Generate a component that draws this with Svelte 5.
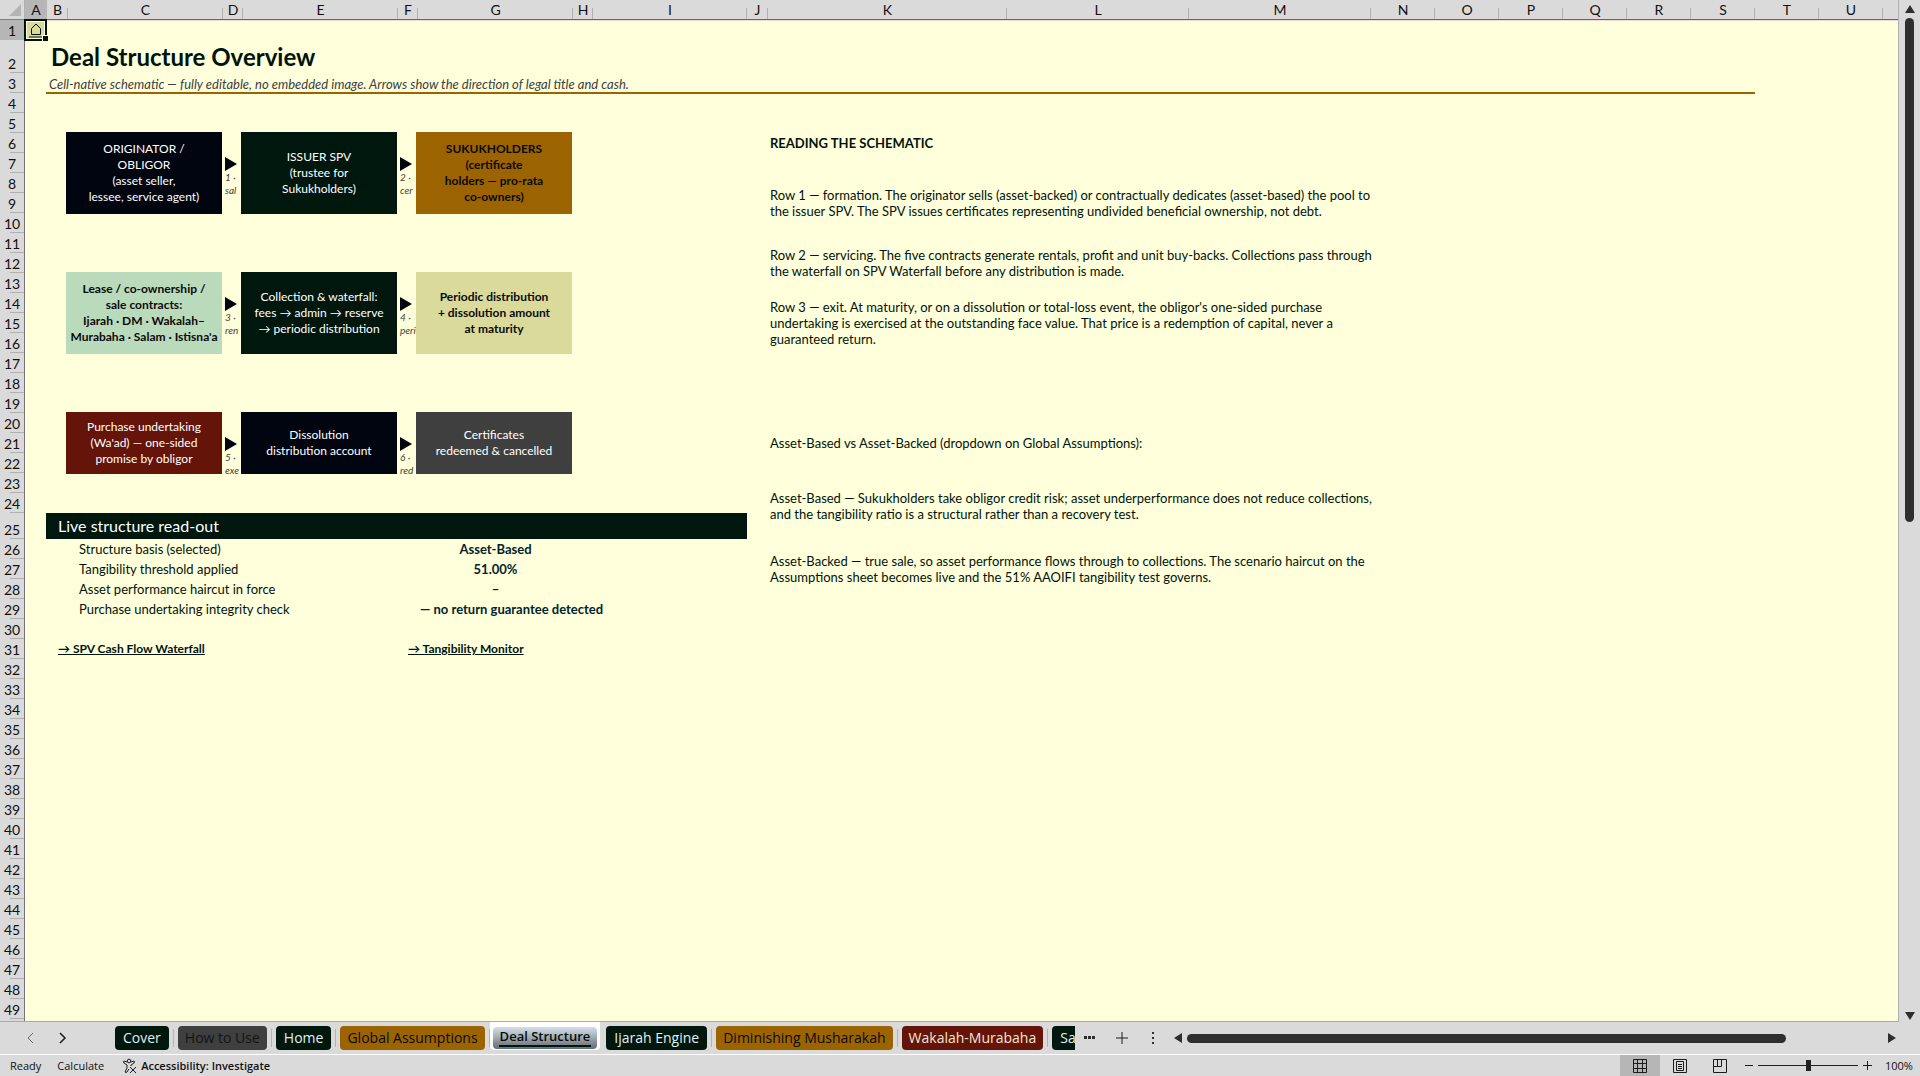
<script lang="ts">
	interface Col {
		name: string;
		width: string;
	}

	interface Box {
		row: string;
		col: number;
		tone: string;
		lines: string[];
	}

	interface Arrow {
		row: number;
		col: number;
		label: string[];
	}

	interface Tab {
		name: string;
		tone: string;
	}

	const cols: Col[] = [
		{ name: 'A', width: '22px' },
		{ name: 'B', width: '21px' },
		{ name: 'C', width: '155px' },
		{ name: 'D', width: '20px' },
		{ name: 'E', width: '155px' },
		{ name: 'F', width: '20px' },
		{ name: 'G', width: '155px' },
		{ name: 'H', width: '20px' },
		{ name: 'I', width: '154px' },
		{ name: 'J', width: '21px' },
		{ name: 'K', width: '239px' },
		{ name: 'L', width: '182px' },
		{ name: 'M', width: '182px' },
		...['N', 'O', 'P', 'Q', 'R', 'S', 'T', 'U'].map((name) => ({ name, width: '64px' }))
	];

	const rowCount = 49;
	const rowHeights: Record<number, string> = { 2: '33px', 25: '26px' };
	const rows = Array.from({ length: rowCount }, (_, i) => i + 1);

	const columnTemplate = cols.map((c) => c.width).join(' ');
	const rowTemplate = rows.map((r) => rowHeights[r] ?? '20px').join(' ');

	const boxes: Box[] = [
		{ row: '6 / 10', col: 3, tone: 'navy', lines: ['ORIGINATOR /', 'OBLIGOR', '(asset seller,', 'lessee, service agent)'] },
		{ row: '6 / 10', col: 5, tone: 'green', lines: ['ISSUER SPV', '(trustee for', 'Sukukholders)'] },
		{ row: '6 / 10', col: 7, tone: 'gold', lines: ['SUKUKHOLDERS', '(certificate', 'holders — pro-rata', 'co-owners)'] },
		{ row: '13 / 17', col: 3, tone: 'mint', lines: ['Lease / co-ownership /', 'sale contracts:', 'Ijarah · DM · Wakalah–', "Murabaha · Salam · Istisna'a"] },
		{ row: '13 / 17', col: 5, tone: 'green', lines: ['Collection & waterfall:', 'fees → admin → reserve', '→ periodic distribution'] },
		{ row: '13 / 17', col: 7, tone: 'sand', lines: ['Periodic distribution', '+ dissolution amount', 'at maturity'] },
		{ row: '20 / 23', col: 3, tone: 'maroon', lines: ['Purchase undertaking', "(Wa'ad) — one-sided", 'promise by obligor'] },
		{ row: '20 / 23', col: 5, tone: 'navy', lines: ['Dissolution', 'distribution account'] },
		{ row: '20 / 23', col: 7, tone: 'grey', lines: ['Certificates', 'redeemed & cancelled'] }
	];

	const arrows: Arrow[] = [
		{ row: 7, col: 4, label: ['1 ·', 'sal'] },
		{ row: 7, col: 6, label: ['2 ·', 'cer'] },
		{ row: 14, col: 4, label: ['3 ·', 'ren'] },
		{ row: 14, col: 6, label: ['4 ·', 'peri'] },
		{ row: 21, col: 4, label: ['5 ·', 'exe'] },
		{ row: 21, col: 6, label: ['6 ·', 'red'] }
	];

	const notes = [
		{ row: '8 / 11', lines: ['Row 1 — formation. The originator sells (asset-backed) or contractually dedicates (asset-based) the pool to', 'the issuer SPV. The SPV issues certificates representing undivided beneficial ownership, not debt.'] },
		{ row: '11 / 14', lines: ['Row 2 — servicing. The five contracts generate rentals, profit and unit buy-backs. Collections pass through', 'the waterfall on SPV Waterfall before any distribution is made.'] },
		{ row: '14 / 17', lines: ["Row 3 — exit. At maturity, or on a dissolution or total-loss event, the obligor's one-sided purchase", 'undertaking is exercised at the outstanding face value. That price is a redemption of capital, never a', 'guaranteed return.'] },
		{ row: '20 / 23', lines: ['Asset-Based vs Asset-Backed (dropdown on Global Assumptions):'] },
		{ row: '23 / 26', lines: ['Asset-Based — Sukukholders take obligor credit risk; asset underperformance does not reduce collections,', 'and the tangibility ratio is a structural rather than a recovery test.'] },
		{ row: '26 / 29', lines: ['Asset-Backed — true sale, so asset performance flows through to collections. The scenario haircut on the', 'Assumptions sheet becomes live and the 51% AAOIFI tangibility test governs.'] }
	];

	const readout = [
		['Structure basis (selected)', 'Asset-Based'],
		['Tangibility threshold applied', '51.00%'],
		['Asset performance haircut in force', '–'],
		['Purchase undertaking integrity check', '— no return guarantee detected']
	];

	const tabs: Tab[] = [
		{ name: 'Cover', tone: 'green' },
		{ name: 'How to Use', tone: 'slate' },
		{ name: 'Home', tone: 'green' },
		{ name: 'Global Assumptions', tone: 'gold' },
		{ name: 'Deal Structure', tone: 'green' },
		{ name: 'Ijarah Engine', tone: 'green' },
		{ name: 'Diminishing Musharakah', tone: 'gold' },
		{ name: 'Wakalah-Murabaha', tone: 'maroon' },
		{ name: 'Salam', tone: 'green' }
	];

	let active = $state('Deal Structure');
	let zoom = $state(100);
</script>

<div class="app">
	<div class="workspace">
		<div class="sheet">
			<div class="corner">
				<svg viewBox="0 0 12 12" width="12" height="12"><path d="M12 0v12H0z" /></svg>
			</div>
			<div class="col-heads" style:grid-template-columns={columnTemplate}>
				{#each cols as col}
					<span class:selected={col.name === 'A'}>{col.name}</span>
				{/each}
			</div>
			<div class="row-heads" style:grid-template-rows={rowTemplate}>
				{#each rows as row}
					<span class:selected={row === 1}>{row}</span>
				{/each}
			</div>

			<main
				class="cells"
				style:grid-template-columns={columnTemplate}
				style:grid-template-rows={rowTemplate}
			>
				<a class="home" href="#home" aria-label="Home">
					<svg viewBox="0 0 14 16" width="14" height="16">
						<path d="M2.500 12.500V6.500L7 2l4.500 4.500v6zM0 15h14" />
					</svg>
				</a>
				<h1>Deal Structure Overview</h1>
				<p class="subtitle">
					Cell-native schematic — fully editable, no embedded image. Arrows show the direction of
					legal title and cash.
				</p>

				{#each boxes as box}
					<div class="box {box.tone}" style:grid-row={box.row} style:grid-column={box.col}>
						{#each box.lines as line}
							<span>{line}</span>
						{/each}
					</div>
				{/each}

				{#each arrows as arrow}
					<div class="arrow" style:grid-row="{arrow.row} / span 3" style:grid-column={arrow.col}>
						<svg viewBox="0 0 12 14" width="12" height="14"><path d="M0 0 12 7 0 14z" /></svg>
						{#each arrow.label as line}
							<span>{line}</span>
						{/each}
					</div>
				{/each}

				<h2 class="notes-title">READING THE SCHEMATIC</h2>
				{#each notes as note}
					<p class="note" style:grid-row={note.row}>
						{#each note.lines as line}
							<span>{line}</span>
						{/each}
					</p>
				{/each}

				<h2 class="banner">Live structure read-out</h2>
				<table class="readout">
					<tbody>
						{#each readout as [label, value]}
							<tr>
								<th scope="row">{label}</th>
								<td><span>{value}</span></td>
							</tr>
						{/each}
					</tbody>
				</table>

				<a class="jump waterfall" href="#waterfall">→ SPV Cash Flow Waterfall</a>
				<a class="jump tangibility" href="#tangibility">→ Tangibility Monitor</a>
			</main>
		</div>

		<div class="vscroll">
			<button aria-label="Scroll up">
				<svg viewBox="0 0 10 8" width="10" height="8"><path d="M5 0 10 8H0z" /></svg>
			</button>
			<div class="vtrack"><div class="thumb"></div></div>
			<button aria-label="Scroll down">
				<svg viewBox="0 0 10 8" width="10" height="8"><path d="M0 0h10L5 8z" /></svg>
			</button>
		</div>
	</div>

	<nav class="tabbar">
		<div class="steps">
			<button aria-label="Previous sheet">
				<svg class="line faded" viewBox="0 0 8 12" width="8" height="12"><path d="M7 1 2 6l5 5" /></svg>
			</button>
			<button aria-label="Next sheet">
				<svg class="line bold" viewBox="0 0 8 12" width="8" height="12"><path d="m1 1 5 5-5 5" /></svg>
			</button>
		</div>
		<div class="tabs">
			{#each tabs as tab}
				<div class="slot" class:current={active === tab.name}>
					<button class="tab {tab.tone}" onclick={() => (active = tab.name)}>{tab.name}</button>
				</div>
			{/each}
		</div>
		<div class="tools">
			<button aria-label="More sheets">
				<svg viewBox="0 0 12 4" width="12" height="4"><path d="M0 0h3v3H0zM4 0h3v3H4zM8 0h3v3H8z" /></svg>
			</button>
			<button aria-label="New sheet">
				<svg class="line" viewBox="0 0 12 12" width="12" height="12"><path d="M6 0v12M0 6h12" /></svg>
			</button>
			<button class="options" aria-label="Sheet options">
				<svg viewBox="0 0 4 12" width="4" height="12"><path d="M0 0h2v2H0zM0 5h2v2H0zM0 10h2v2H0z" /></svg>
			</button>
		</div>
		<div class="hscroll">
			<button aria-label="Scroll left">
				<svg viewBox="0 0 8 10" width="8" height="10"><path d="M8 0v10L0 5z" /></svg>
			</button>
			<div class="htrack"><div class="thumb"></div></div>
			<button aria-label="Scroll right">
				<svg viewBox="0 0 8 10" width="8" height="10"><path d="M0 0v10l8-5z" /></svg>
			</button>
		</div>
	</nav>

	<footer class="status">
		<span>Ready</span>
		<span>Calculate</span>
		<button class="access">
			<svg class="line" viewBox="0 0 16 16" width="16" height="16">
				<circle cx="7" cy="3" r="1.800" />
				<path d="M5 4 2 3Q1 4 2 5l3 2v3l-2 4q1 1 2 0l2-3M9 4l3-1q1 1 0 2L9 7v1M8 9l6 6M14 9l-6 6" />
			</svg>
			Accessibility: Investigate
		</button>
		<div class="views">
			<button class="on" aria-label="Normal view">
				<svg class="line" viewBox="0 0 14 14" width="14" height="14"><path d="M.5.5h13v13H.5zM4.500.5v13M9.500.5v13M.5 4.500h13M.5 9.500h13" /></svg>
			</button>
			<button aria-label="Page layout">
				<svg class="line" viewBox="0 0 14 14" width="14" height="14"><path d="M.5.5h13v13H.5zM3.500 2.500h7v9h-7zM5 5.500h4M5 7.500h4M5 9.500h4" /></svg>
			</button>
			<button aria-label="Page break preview">
				<svg class="line" viewBox="0 0 14 14" width="14" height="14"><path d="M.5.5h13v13H.5zM.5 7.500h8v-7M4.500.5v7" /></svg>
			</button>
		</div>
		<button class="step" aria-label="Zoom out" onclick={() => (zoom -= 10)}>
			<svg class="line" viewBox="0 0 8 9" width="8" height="9"><path d="M0 4.500h8" /></svg>
		</button>
		<input type="range" min="0" max="200" bind:value={zoom} aria-label="Zoom" />
		<button class="step" aria-label="Zoom in" onclick={() => (zoom += 10)}>
			<svg class="line" viewBox="0 0 9 9" width="9" height="9"><path d="M0 4.500h9M4.500 0v9" /></svg>
		</button>
		<span class="percent">{zoom}%</span>
	</footer>
</div>

<style>
	:global(body) {
		margin: 0;
		background: #dadada;
	}

	.app {
		display: flex;
		flex-direction: column;
		height: 100vh;
		overflow: hidden;
		font-family: Lato, 'Liberation Sans', sans-serif;
		font-size: 13px;
		line-height: 16px;
		color: #00140c;
	}

	h1,
	h2,
	p {
		margin: 0;
	}

	button {
		display: flex;
		align-items: center;
		justify-content: center;
		padding: 0;
		border: 0;
		background: none;
		font: inherit;
		color: inherit;
	}

	svg {
		display: block;
		flex: none;
		fill: #2e2e2e;
	}

	svg.line {
		fill: none;
		stroke: #1c1c1c;
	}

	svg.bold {
		stroke-width: 1.5;
	}

	.workspace {
		display: flex;
		flex: 1;
		min-height: 0;
	}

	.sheet {
		display: grid;
		grid-template: 20px minmax(0, 1fr) / 25px minmax(0, 1fr);
		flex: 1;
		min-width: 0;
		border-right: 1px solid #b0b0b0;
		border-bottom: 1px solid #b0a8a8;
		overflow: hidden;
	}

	.corner {
		display: flex;
		align-items: flex-end;
		justify-content: flex-end;
		padding: 0 3px 3px 0;
		border-right: 1px solid #b0b0b0;
		border-bottom: 1px solid #808080;
	}

	.corner svg {
		fill: #b4b4b4;
	}

	.col-heads,
	.row-heads {
		display: grid;
		align-content: start;
		background: #dadada;
		font-size: 14px;
		color: #111;
	}

	.col-heads {
		grid-template-rows: 19px;
		border-bottom: 1px solid #6c6468;
	}

	.col-heads span {
		padding-top: 2px;
		text-align: center;
		background: linear-gradient(#b0b0b0, #b0b0b0) right bottom / 1px 11px no-repeat;
	}

	.row-heads {
		border-right: 1px solid #7a7276;
	}

	.row-heads span {
		display: flex;
		align-items: flex-end;
		justify-content: center;
		padding-bottom: 1px;
		background: linear-gradient(#b0b0b0, #b0b0b0) right bottom / 14px 1px no-repeat;
	}

	.col-heads .selected,
	.row-heads .selected {
		background: #b6b6b6;
	}

	.cells {
		display: grid;
		align-content: start;
		background: #ffffdb;
		box-shadow: inset 0 1px #f3d9d0;
		white-space: nowrap;
	}

	.home {
		position: relative;
		display: flex;
		align-items: center;
		justify-content: center;
		grid-area: 1 / 1;
		margin: -1px 0 -1px -1px;
		border: 2px solid #00140c;
		background: #dada9b;
		box-shadow: inset 0 0 0 1px #ffffdb;
	}

	.home::after {
		content: '';
		position: absolute;
		right: -4px;
		bottom: -3px;
		width: 5px;
		height: 5px;
		border: 1px solid #ffffdb;
		background: #00140c;
	}

	.home svg {
		fill: none;
		stroke: #00140c;
	}

	h1 {
		grid-area: 2 / 2 / 3 / 12;
		align-self: center;
		padding-left: 4px;
		font-size: 24px;
		line-height: 30px;
		font-weight: 700;
	}

	.subtitle {
		grid-area: 3 / 2 / 4 / 20;
		margin: 0 0 -1px -1px;
		padding: 3px 0 0 3px;
		border-bottom: 2px solid #9b6400;
		font-style: italic;
		color: #404040;
	}

	.box {
		display: flex;
		flex-direction: column;
		align-items: center;
		justify-content: center;
		margin: -1px 1px -1px -2px;
		font-size: 12px;
		color: #fff;
	}

	.navy {
		background: #00050f;
	}

	.green {
		background: #00170e;
	}

	.gold {
		background: #9b6400;
		color: #0a0a0a;
	}

	.box.gold,
	.box.mint,
	.box.sand {
		font-weight: 700;
		color: #0a0a0a;
	}

	.mint {
		background: #b9dabb;
	}

	.sand {
		background: #dada9b;
	}

	.maroon {
		background: #641408;
	}

	.box.grey {
		background: #3f3f3f;
	}

	.arrow {
		display: flex;
		flex-direction: column;
		align-items: flex-start;
		padding: 4px 0 0 2px;
		overflow: hidden;
		font-size: 10px;
		line-height: 13px;
		font-style: italic;
		color: #404040;
	}

	.arrow svg {
		fill: #00050f;
	}

	.notes-title {
		grid-area: 6 / 11 / 7 / 14;
		align-self: center;
		padding-left: 2px;
		font-size: 13px;
	}

	.note {
		display: flex;
		flex-direction: column;
		justify-content: center;
		grid-column: 11 / 14;
		padding-left: 2px;
	}

	.banner {
		display: flex;
		align-items: center;
		grid-area: 25 / 2 / 26 / 10;
		margin-left: -1px;
		padding-left: 12px;
		background: #00170e;
		font-size: 16px;
		font-weight: 400;
		color: #fff;
	}

	.readout {
		grid-area: 26 / 3 / 30 / 10;
		width: 100%;
		table-layout: fixed;
		border-collapse: collapse;
	}

	.readout th,
	.readout td {
		height: 20px;
		padding: 0;
	}

	.readout th {
		width: 350px;
		padding-left: 11px;
		box-sizing: border-box;
		font-weight: 400;
		text-align: left;
	}

	.readout td {
		font-weight: 700;
		color: #00242c;
	}

	.readout td span {
		display: inline-block;
		min-width: 155px;
		padding: 0 2px;
		box-sizing: border-box;
		text-align: center;
	}

	.jump {
		align-self: center;
		font-size: 12px;
		font-weight: 700;
		color: #00140c;
	}

	.waterfall {
		grid-area: 31 / 2 / 32 / 6;
		padding-left: 11px;
	}

	.tangibility {
		grid-area: 31 / 6 / 32 / 10;
		padding-left: 10px;
	}

	.vscroll {
		display: flex;
		flex-direction: column;
		align-items: center;
		gap: 5px;
		width: 21px;
		padding: 5px 0 2px;
	}

	.vtrack {
		flex: 1;
		width: 9px;
	}

	.thumb {
		border-radius: 5px;
		background: #2e2e2e;
	}

	.vtrack .thumb {
		height: 51%;
	}

	.tabbar {
		display: flex;
		align-items: center;
		height: 32px;
		border-bottom: 1px solid #fff;
		font-family: 'Open Sans', 'Noto Sans', sans-serif;
		font-size: 14px;
	}

	.steps {
		display: flex;
		gap: 25px;
		width: 111px;
		padding-left: 26px;
		box-sizing: border-box;
	}

	.faded {
		opacity: 0.6;
	}

	.tabs {
		display: flex;
		align-items: center;
		width: 964px;
		height: 100%;
		overflow: hidden;
	}

	.slot {
		display: flex;
		align-items: center;
		flex: none;
		height: 100%;
		padding: 0 5px 0 4px;
	}

	.slot:not(.current) {
		background: linear-gradient(#b4b4b4, #b4b4b4) right center / 1px 18px no-repeat;
	}

	.tab {
		height: 24px;
		padding: 0 7px;
		border-radius: 4px;
		white-space: nowrap;
	}

	.tab.green {
		padding: 0 8px;
		color: #e0f0f0;
	}

	.tab.slate {
		background: #3f3f3f;
		color: #141414;
	}

	.tab.maroon {
		color: #f8e4d0;
	}

	.slot.current {
		align-self: flex-start;
		height: 28px;
		margin-right: 2px;
		padding: 0 3px;
		border-radius: 0 0 4px 4px;
		background: #fff;
	}

	.slot.current .tab {
		height: 22px;
		margin-top: 3px;
		padding: 0 7px 4px;
		background:
			linear-gradient(#00170e, #00170e) center 18px / calc(100% - 12px) 2px no-repeat,
			linear-gradient(#d8dce8, #a4b8bc 40%, #84848c 75%, #5c7480);
		font-size: 13px;
		font-weight: 600;
		color: #0a0a0a;
	}

	.tools {
		display: flex;
		align-items: center;
		gap: 20px;
		padding-left: 9px;
	}

	.options {
		margin-left: 4px;
	}

	.hscroll {
		display: flex;
		align-items: center;
		flex: 1;
		gap: 5px;
		margin: 0 24px 0 18px;
	}

	.htrack {
		flex: 1;
		height: 9px;
	}

	.htrack .thumb {
		width: 86%;
		height: 100%;
	}

	.status {
		display: flex;
		align-items: center;
		height: 21px;
		padding: 0 8px 0 10px;
		font-family: 'Open Sans', 'Noto Sans', sans-serif;
		font-size: 11px;
		color: #111;
	}

	.status > span:first-child {
		margin-right: 16px;
	}

	.access {
		gap: 3px;
		margin-left: 18px;
		font-weight: 600;
	}

	.views {
		display: flex;
		align-self: stretch;
		margin-left: auto;
	}

	.views button {
		width: 40px;
	}

	.views .on {
		background: #b6b6b6;
	}

	.step {
		margin: 0 5px;
	}

	input[type='range'] {
		appearance: none;
		width: 100px;
		height: 12px;
		margin: 0;
		background: linear-gradient(#222, #222) center / 100% 1px no-repeat;
	}

	input[type='range']::-webkit-slider-thumb {
		appearance: none;
		width: 5px;
		height: 11px;
		background: #222;
	}

	.percent {
		width: 27px;
		margin-left: 8px;
	}
</style>
